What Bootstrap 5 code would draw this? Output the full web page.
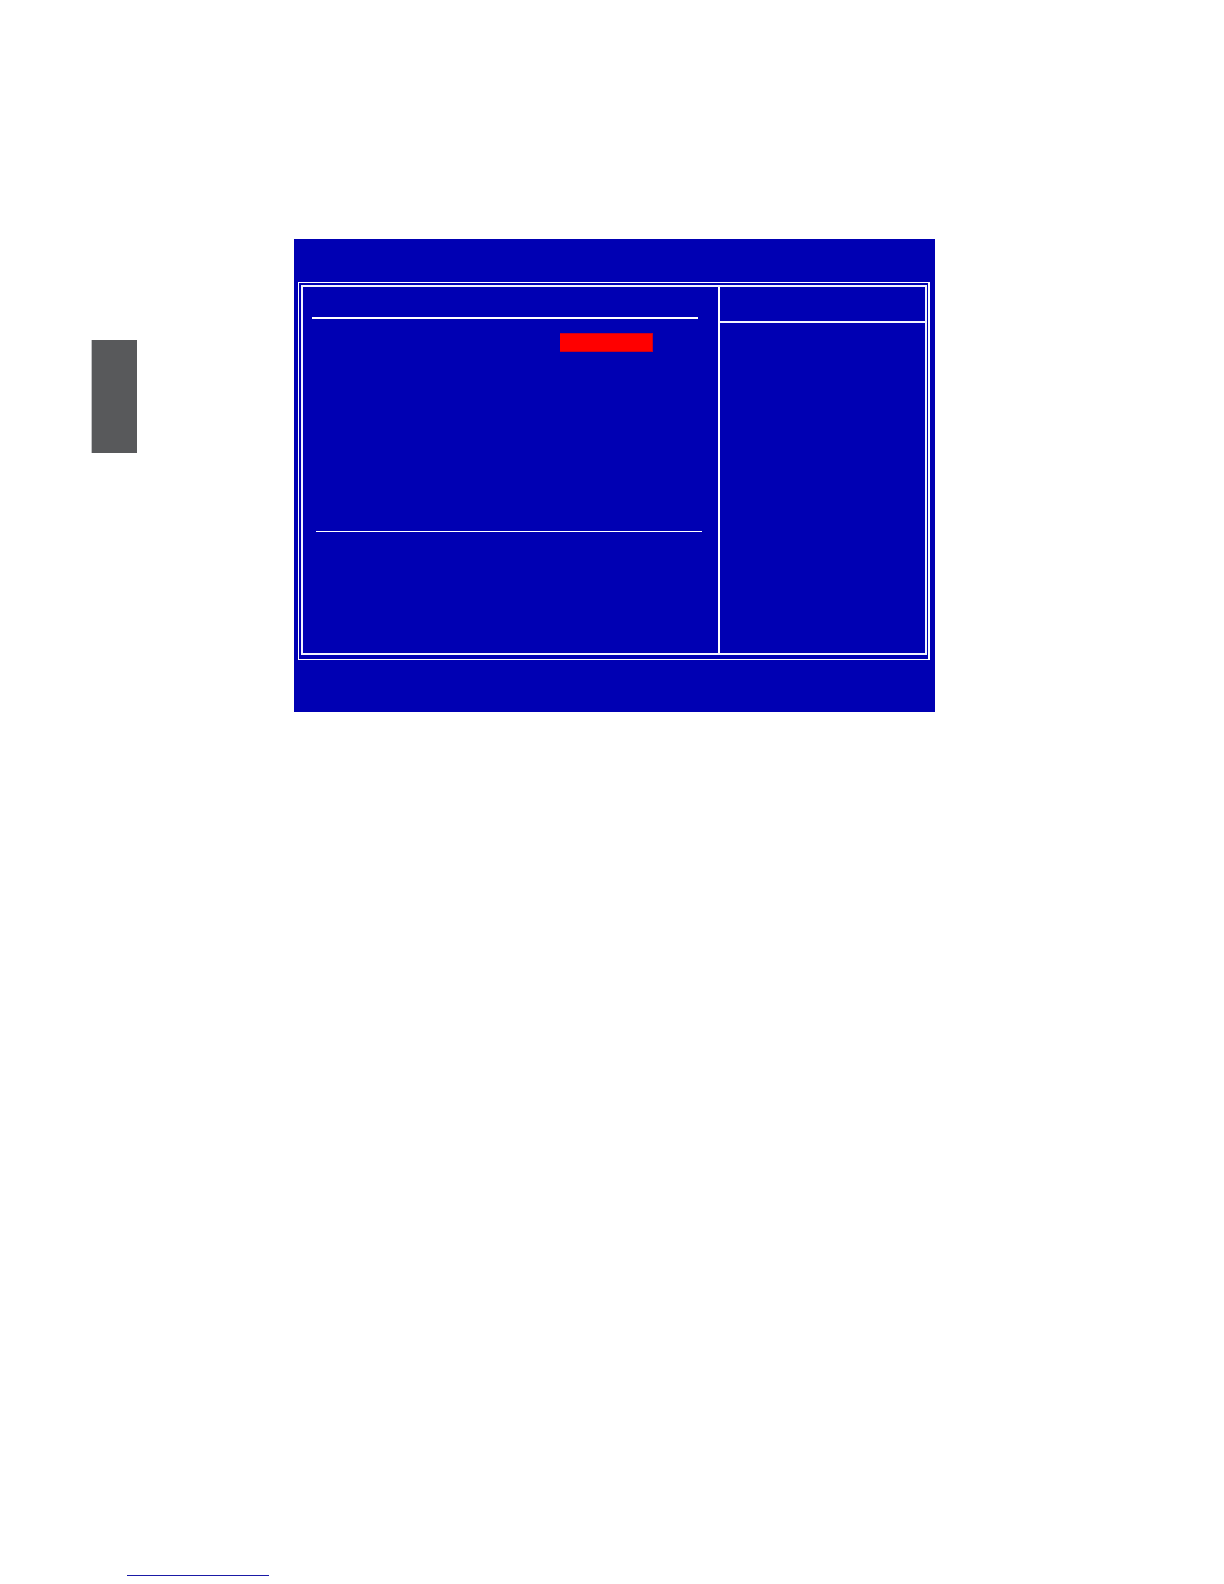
<!DOCTYPE html>
<html lang="en">
<head>
<meta charset="utf-8">
<meta name="viewport" content="width=device-width, initial-scale=1">
<title>BIOS setup screen</title>
<link href="https://cdn.jsdelivr.net/npm/bootstrap@5.3.0/dist/css/bootstrap.min.css" rel="stylesheet">
<style>
  body { background: #fff; font-family: "Liberation Sans", sans-serif; }
  .sheet { padding-top: 239px; }
  .side-area { width: 294px; padding: 101px 0 0 91px; }
  .side-tab { width: 46px; height: 113px; background: #58595b; border-left: 1px solid #c4c5c6; }
  .bios { background: #0000b3; margin-right: 289px; padding: 43px 5px 52px 4px; }
  .frame-outer { border: 1px solid #fff; border-right-width: 2px; padding: 2px 1px 4px 2px; }
  .frame-inner { border: 2px solid #f2f4ff; min-height: 370px; }
  .items-pane { padding: 30px 16px 0 9px; }
  .heading-rule { height: 2px; background: #fff; margin-right: 4px; }
  .selected-item { width: 93px; height: 19px; margin: 14px 49px 0 0; background: #f00; border: 1px solid #c80020; border-left: 0; }
  .lower-rule { height: 1px; margin: 179px 0 0 4px; background: #fff; }
  .help-pane { width: 207px; border-left: 2px solid #fff; }
  .help-heading { height: 36px; border-bottom: 2px solid #f2f4ff; }
  .page-foot { padding: 0 0 8px 127px; }
  .foot-rule { width: 142px; height: 1px; background: #1a1aa6; }
</style>
<script src="https://cdn.jsdelivr.net/npm/bootstrap@5.3.0/dist/js/bootstrap.bundle.min.js" defer></script>
</head>
<body>
<div class="sheet d-flex flex-column min-vh-100">
  <main class="d-flex align-items-start">
    <aside class="side-area flex-shrink-0"><div class="side-tab"></div></aside>
    <section class="bios flex-grow-1">
      <div class="frame-outer">
        <div class="frame-inner d-flex">
          <div class="items-pane flex-grow-1">
            <div class="heading-rule"></div>
            <div class="d-flex justify-content-end"><div class="selected-item"></div></div>
            <div class="lower-rule"></div>
          </div>
          <div class="help-pane flex-shrink-0"><div class="help-heading"></div></div>
        </div>
      </div>
    </section>
  </main>
  <footer class="page-foot mt-auto"><div class="foot-rule"></div></footer>
</div>
</body>
</html>
